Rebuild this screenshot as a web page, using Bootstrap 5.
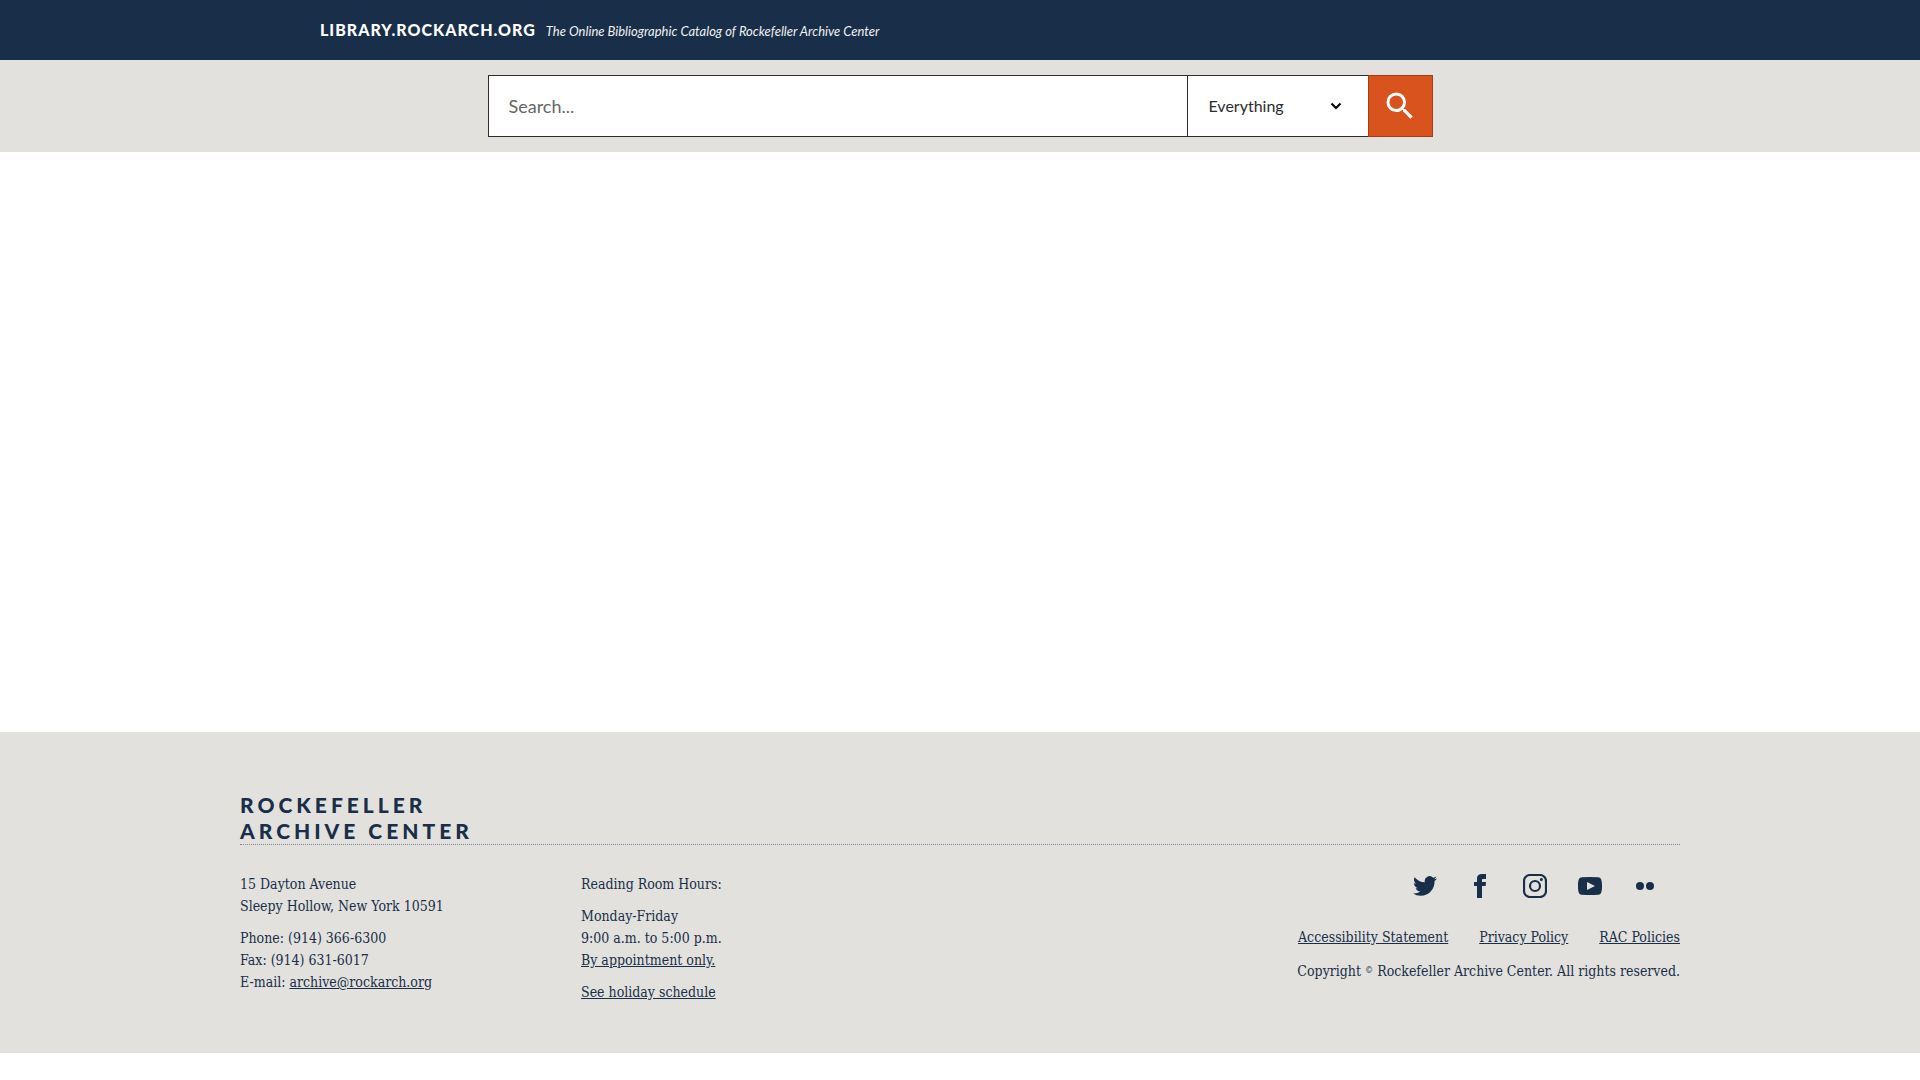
<!DOCTYPE html>
<html lang="en">
<head>
<meta charset="utf-8">
<meta name="viewport" content="width=device-width, initial-scale=1">
<title>Rockefeller Archive Center Library</title>
<link href="https://cdn.jsdelivr.net/npm/bootstrap@5.3.0/dist/css/bootstrap.min.css" rel="stylesheet">
<style>
:root { --navy: #192e49; --stone: #e2e1dd; --ink: #2c2c2c; }
body { font-family: Lato, "Open Sans", sans-serif; color: var(--ink); background: #fff; }
.site-header { background: var(--navy); min-height: 60px; padding-left: 16.667%; }
.site-titles { column-gap: 10px; }
.site-name { color: #fff; font-family: "Lato Black", Lato, sans-serif; font-size: 16px; font-weight: 900; letter-spacing: 1px; line-height: 24px; }
.site-tagline { color: #f0f1f3; font-size: 13px; font-style: italic; line-height: 24px; }
.search-band { background: var(--stone); padding: 15px 12px; }
.search-form { max-width: 945px; height: 62px; }
.search-form .form-control, .search-form .form-select { border: 1px solid var(--ink); color: var(--ink); }
.search-form .form-control { font-size: 18px; padding: 0 20px; border-right: 0; }
.search-form .form-control::placeholder { color: #666; }
.search-form .form-select {
  flex: 0 0 181px; border-right: 0; font-size: 16px; padding: 0 40px 0 21px;
  background-image: url("data:image/svg+xml,%3Csvg xmlns='http://www.w3.org/2000/svg' viewBox='0 0 12 12'%3E%3Cpath d='M1.5 3.5 6 8l4.500-4.500' fill='none' stroke='%23000' stroke-width='2'/%3E%3C/svg%3E");
  background-position: right 26px center; background-size: 12px 12px;
}
.search-btn { flex: 0 0 65px; background: #d9531e; border: 1px solid #a63c11; color: #fff; }
.search-btn:hover { background: #b94314; color: #fff; }
.results-area { min-height: 580px; }
.site-footer { background: var(--stone); color: var(--navy); padding: 60px 0 50px; font-family: "DejaVu Serif Condensed", "Liberation Serif", serif; font-size: 14px; line-height: 22px; }
.site-footer a { color: var(--navy); }
.footer-inner { width: 75%; }
.footer-brand { font-family: "Lato Black", Lato, sans-serif; font-size: 21px; font-weight: 900; letter-spacing: 4px; line-height: 26px; border-bottom: 1px dotted #8088a0; }
.footer-cols { padding-top: 28px; }
.footer-block { flex: 0 1 341px; }
.footer-cols p { margin-bottom: 10px; }
.footer-cols p:last-child { margin-bottom: 0; }
.social-list { gap: 31px; padding: 1px 23px 0 0; margin-bottom: 28px; }
.social-list svg, .search-btn svg { display: block; fill: currentColor; }
.policy-list { gap: 31px; margin-bottom: 12px; }
.copy-sign { font-size: 9px; line-height: 1; vertical-align: 3px; }
</style>
<script src="https://cdn.jsdelivr.net/npm/bootstrap@5.3.0/dist/js/bootstrap.bundle.min.js"></script>
</head>
<body>
<header class="site-header d-flex align-items-center">
  <div class="site-titles d-flex flex-wrap align-items-baseline">
    <a class="site-name text-decoration-none" href="#">LIBRARY.ROCKARCH.ORG</a>
    <span class="site-tagline">The Online Bibliographic Catalog of Rockefeller Archive Center</span>
  </div>
</header>
<section class="search-band">
  <form class="search-form d-flex mx-auto" role="search">
    <input class="form-control rounded-0" id="query" type="search" placeholder="Search..." aria-label="Search">
    <select class="form-select rounded-0" id="scope" aria-label="Search in"><option>Everything</option></select>
    <button class="search-btn btn rounded-0 p-0 d-flex align-items-center justify-content-center" type="submit" aria-label="Search">
      <svg width="36" height="36" viewBox="0 0 24 24"><path d="M15.500 14h-.79l-.28-.27A6.471 6.471 0 0 0 16 9.500 6.500 6.500 0 1 0 9.500 16c1.610 0 3.090-.59 4.230-1.570l.27.28v.79l5 4.990L20.490 19l-4.990-5zm-6 0C7.010 14 5 11.990 5 9.500S7.010 5 9.500 5 14 7.010 14 9.500 11.990 14 9.500 14z"/></svg>
    </button>
  </form>
</section>
<main class="results-area"></main>
<footer class="site-footer">
  <div class="footer-inner mx-auto">
    <div class="footer-brand">ROCKEFELLER<br>ARCHIVE CENTER</div>
    <div class="footer-cols d-flex flex-wrap">
      <address class="footer-block mb-0">
        <p>15 Dayton Avenue<br>Sleepy Hollow, New York 10591</p>
        <p>Phone: (914) 366-6300<br>Fax: (914) 631-6017<br>E-mail: <a href="#">archive@rockarch.org</a></p>
      </address>
      <div class="footer-block">
        <p>Reading Room Hours:</p>
        <p>Monday-Friday<br>9:00 a.m. to 5:00 p.m.<br><a href="#">By appointment only.</a></p>
        <p><a href="#">See holiday schedule</a></p>
      </div>
      <div class="ms-auto text-end">
        <ul class="social-list list-unstyled d-flex justify-content-end">
          <li><a href="#" aria-label="Twitter"><svg width="24" height="24" viewBox="0 0 24 24"><path d="M24 4.557a9.830 9.830 0 0 1-2.828.775 4.932 4.932 0 0 0 2.165-2.724 9.864 9.864 0 0 1-3.127 1.195 4.916 4.916 0 0 0-8.384 4.482A13.944 13.944 0 0 1 1.671 3.149a4.916 4.916 0 0 0 1.523 6.574 4.903 4.903 0 0 1-2.229-.616c-.054 2.281 1.581 4.415 3.949 4.890a4.935 4.935 0 0 1-2.224.084 4.918 4.918 0 0 0 4.600 3.419A9.900 9.900 0 0 1 0 19.540a13.940 13.940 0 0 0 7.548 2.212c9.142 0 14.307-7.721 13.995-14.646A10.025 10.025 0 0 0 24 4.557z"/></svg></a></li>
          <li><a href="#" aria-label="Facebook"><svg width="24" height="24" viewBox="0 0 24 24"><path d="M9 8H6v4h3v12h5V12h3.642L18 8h-4V6.333C14 5.378 14.192 5 15.115 5H18V0h-3.808C10.596 0 9 1.583 9 4.615V8z"/></svg></a></li>
          <li><a href="#" aria-label="Instagram"><svg width="24" height="24" viewBox="0 0 24 24"><rect x="1" y="1" width="22" height="22" rx="6" fill="none" stroke="currentColor" stroke-width="2.200"/><circle cx="12" cy="12" r="5" fill="none" stroke="currentColor" stroke-width="2.200"/><circle cx="18.400" cy="5.600" r="1.500"/></svg></a></li>
          <li><a href="#" aria-label="YouTube"><svg width="24" height="24" viewBox="0 0 24 24"><path fill-rule="evenodd" d="M4 3.200Q12 2.700 20 3.200C23 3.400 24 5.500 24 12s-1 8.600-4 8.800q-8 .5-16 0C1 20.600 0 18.500 0 12s1-8.600 4-8.800zM9 8v8l8-4z"/></svg></a></li>
          <li><a href="#" aria-label="Flickr"><svg width="24" height="24" viewBox="0 0 24 24"><circle cx="7" cy="12" r="4"/><circle cx="17" cy="12" r="4"/></svg></a></li>
        </ul>
        <ul class="policy-list list-unstyled d-flex flex-wrap justify-content-end">
          <li><a href="#">Accessibility Statement</a></li>
          <li><a href="#">Privacy Policy</a></li>
          <li><a href="#">RAC Policies</a></li>
        </ul>
        <p>Copyright <span class="copy-sign">©</span> Rockefeller Archive Center. All rights reserved.</p>
      </div>
    </div>
  </div>
</footer>
</body>
</html>
